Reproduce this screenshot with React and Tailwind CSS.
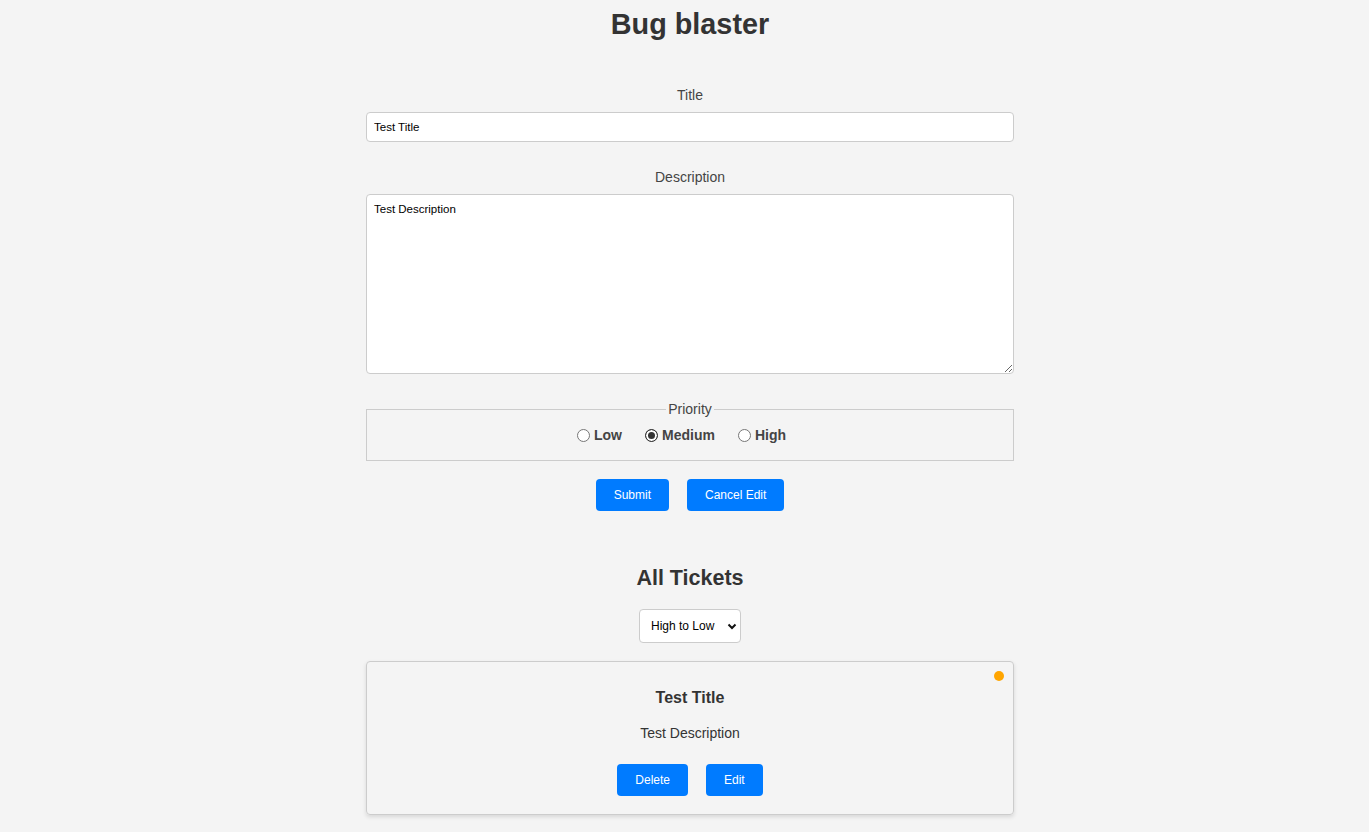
import * as React from "react"

const font = { fontFamily: '"Liberation Sans", Arial, sans-serif' }

function Radio({ label, checked }) {
    return (
        <label className="flex items-center">
            <input
                type="radio"
                name="priority"
                defaultChecked={checked}
                className="appearance-none ml-[5px] mr-[4px] w-[13px] h-[13px] rounded-full border border-[#767676] bg-white checked:bg-[#333] checked:border-[#333] checked:shadow-[inset_0_0_0_2px_white]"
            />
            <span className="text-[14px] leading-[16px] font-bold text-[#444]">{label}</span>
        </label>
    )
}

function BlueButton({ children }) {
    return (
        <button className="h-[32px] px-[18px] rounded-[4px] bg-[#007bff] text-white text-[12px] leading-none">
            {children}
        </button>
    )
}

export default function App() {
    return (
        <div className="min-h-[832px] bg-[#f4f4f4] text-[#333] flex justify-center pl-[11px]" style={font}>
            <div className="w-[648px] flex flex-col">
                <h1 className="mt-[8px] text-center text-[28.8px] leading-[33px] font-bold">Bug blaster</h1>

                <label className="mt-[46px] text-center text-[14px] leading-[16px] text-[#444]">Title</label>
                <input
                    defaultValue="Test Title"
                    className="mt-[9px] h-[30px] px-[7px] bg-white border border-[#ccc] rounded-[4px] text-[11.5px] text-black outline-none"
                />

                <label className="mt-[27px] text-center text-[14px] leading-[16px] text-[#444]">Description</label>
                <textarea
                    defaultValue="Test Description"
                    className="mt-[9px] h-[180px] px-[7px] py-[7px] bg-white border border-[#ccc] rounded-[4px] text-[11.5px] leading-[14px] text-black outline-none"
                />

                <fieldset className="mt-[27px] border border-[#ccc] pb-[17px]">
                    <legend className="mx-auto px-[2px] text-[14px] leading-[16px] text-[#444]">Priority</legend>
                    <div className="mt-[10px] flex justify-center gap-[18px] pr-[22px]">
                        <Radio label="Low" />
                        <Radio label="Medium" checked />
                        <Radio label="High" />
                    </div>
                </fieldset>

                <div className="mt-[18px] flex justify-center gap-[18px]">
                    <BlueButton>Submit</BlueButton>
                    <BlueButton>Cancel Edit</BlueButton>
                </div>

                <h2 className="mt-[55px] text-center text-[21.5px] leading-[25px] font-bold">All Tickets</h2>

                <div className="mt-[18px] flex justify-center">
                    <div className="relative">
                        <select className="appearance-none w-[102px] h-[34px] pl-[11px] pr-[24px] bg-white border border-[#ccc] rounded-[4px] text-[12px] text-black outline-none">
                            <option>High to Low</option>
                            <option>Low to High</option>
                        </select>
                        <svg className="absolute right-[4px] top-[14px] pointer-events-none" width="10" height="7" viewBox="0 0 10 7">
                            <polyline points="1.5,1.5 5,5 8.5,1.5" fill="none" stroke="#111" strokeWidth="2" />
                        </svg>
                    </div>
                </div>

                <div className="relative mt-[18px] border border-[#ccc] rounded-[4px] shadow-[0_2px_4px_rgba(0,0,0,0.12)] pt-[27px] pb-[18px] flex flex-col items-center">
                    <span className="absolute top-[9px] right-[9px] w-[10px] h-[10px] rounded-full bg-[#ffa500]" />
                    <h3 className="text-[16px] leading-[18px] font-bold">Test Title</h3>
                    <p className="mt-[18px] text-[14px] leading-[16px]">Test Description</p>
                    <div className="mt-[23px] flex gap-[18px]">
                        <BlueButton>Delete</BlueButton>
                        <BlueButton>Edit</BlueButton>
                    </div>
                </div>
            </div>
        </div>
    )
}
